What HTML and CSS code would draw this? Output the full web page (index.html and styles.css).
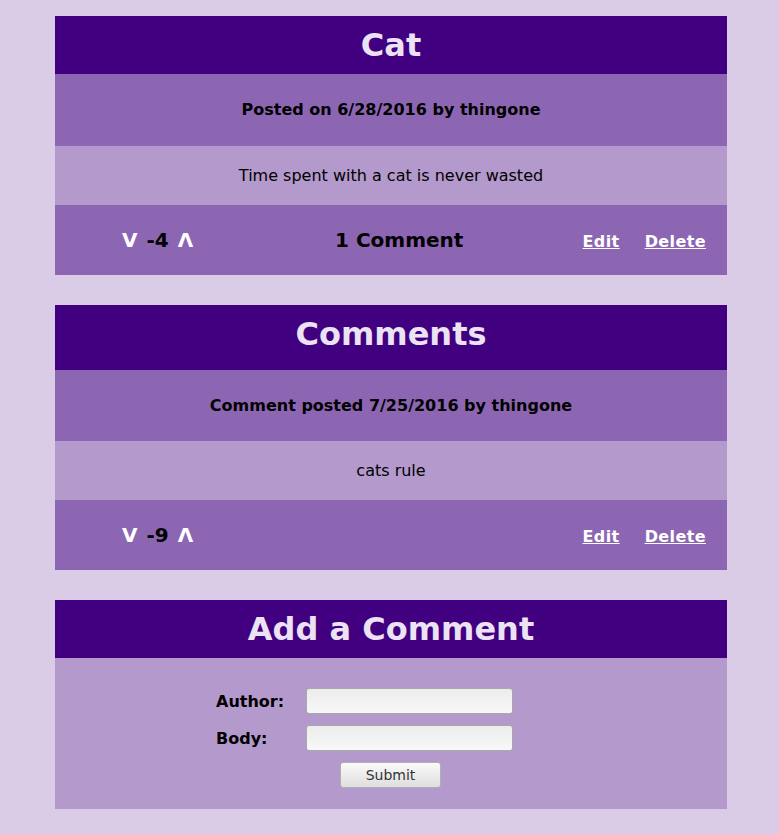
FILE: index.html
```html
<!DOCTYPE html>
<html>
<head>
<meta charset="utf-8">
<link rel="stylesheet" href="styles.css">
</head>
<body>
<div class="page">
  <section class="card">
    <h1 class="title">Cat</h1>
    <div class="meta">Posted on 6/28/2016 by thingone</div>
    <div class="content">Time spent with a cat is never wasted</div>
    <div class="footer">
      <div class="votes"><span class="arrow">V</span> <span class="score">-4</span> <span class="arrow">&Lambda;</span></div>
      <div class="count">1 Comment</div>
      <div class="links"><a href="#">Edit</a><a href="#">Delete</a></div>
    </div>
  </section>

  <section class="card">
    <h2 class="title title-comments">Comments</h2>
    <div class="meta meta-comment">Comment posted 7/25/2016 by thingone</div>
    <div class="content">cats rule</div>
    <div class="footer">
      <div class="votes"><span class="arrow">V</span> <span class="score">-9</span> <span class="arrow">&Lambda;</span></div>
      <div class="links"><a href="#">Edit</a><a href="#">Delete</a></div>
    </div>
  </section>

  <section class="card">
    <h2 class="title">Add a Comment</h2>
    <form class="form">
      <div class="row"><label class="label">Author:</label><input class="field" type="text"></div>
      <div class="row"><label class="label">Body:</label><input class="field" type="text"></div>
      <div class="actions"><button class="submit" type="button">Submit</button></div>
    </form>
  </section>
</div>
</body>
</html>
```

FILE: styles.css
```css
html, body {
  margin: 0;
  padding: 0;
}
body {
  background: #dacce6;
  font-family: "DejaVu Sans", sans-serif;
  color: #000;
}
.page {
  width: 672px;
  margin-left: 55px;
  padding-top: 16px;
  display: flex;
  flex-direction: column;
  gap: 30px;
}
.card {
  display: flex;
  flex-direction: column;
}
.title {
  margin: 0;
  background: #400080;
  color: #ebe3f3;
  font-size: 32px;
  font-weight: bold;
  text-align: center;
  height: 58px;
  line-height: 58px;
}
.title-comments {
  height: 65px;
  line-height: 58px;
}
.meta {
  background: #8d66b3;
  height: 72px;
  line-height: 72px;
  text-align: center;
  font-weight: bold;
  font-size: 16px;
}
.meta-comment {
  height: 71px;
  line-height: 71px;
}
.content {
  background: #b399cc;
  height: 59px;
  line-height: 59px;
  text-align: center;
  font-size: 16px;
}
.footer {
  background: #8d66b3;
  height: 70px;
  display: flex;
  align-items: center;
}
.votes {
  width: 280px;
  padding-left: 67px;
  box-sizing: border-box;
  font-size: 20px;
  font-weight: bold;
  white-space: nowrap;
  word-spacing: 2px;
}
.arrow {
  color: #fff;
}
.count {
  font-size: 20px;
  font-weight: bold;
}
.links {
  margin-left: auto;
  padding-right: 21px;
  display: flex;
  gap: 25px;
  padding-top: 2px;
}
.links a {
  color: #fff;
  font-weight: bold;
  font-size: 16px;
  letter-spacing: 0.4px;
  text-decoration: underline;
}
.form {
  background: #b399cc;
  padding: 30px 0 21px;
  display: flex;
  flex-direction: column;
  gap: 11px;
}
.row {
  display: flex;
  align-items: center;
  padding-left: 161px;
}
.label {
  width: 90px;
  font-weight: bold;
  font-size: 16px;
}
.field {
  width: 207px;
  height: 26px;
  box-sizing: border-box;
  margin: 0;
  border: 1px solid #a9a9a9;
  border-radius: 3px;
  background: linear-gradient(#ececec, #f8f8f8);
}
.actions {
  display: flex;
  padding-left: 285px;
}
.submit {
  width: 101px;
  height: 26px;
  box-sizing: border-box;
  border: 1px solid #b0b0b0;
  border-radius: 3px;
  background: linear-gradient(#fafafa, #dedede);
  font-family: "DejaVu Sans", sans-serif;
  font-size: 14px;
  color: #333;
  padding: 0;
}
```
